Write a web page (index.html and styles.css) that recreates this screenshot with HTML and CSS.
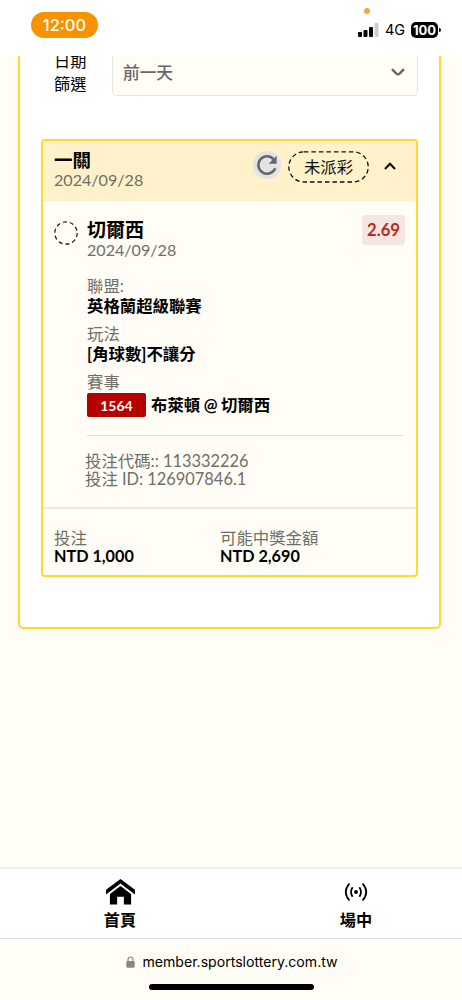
FILE: index.html
```
<!DOCTYPE html>
<html lang="zh-Hant">
<head>
    <meta charset="UTF-8">
    <meta name="viewport" content="width=device-width, initial-scale=1.0">
    <title>投注紀錄</title>
    <link rel="stylesheet" href="styles.css">
</head>
<body>

    <header class="status-bar">
        <span class="clock">12:00</span>
        <div class="status-right">
            <span class="mic-dot"></span>
            <svg class="signal" width="21" height="14" viewBox="0 0 21 14">
                <rect x="0" y="9" width="4" height="5" rx="1"/>
                <rect x="5.5" y="7" width="4" height="7" rx="1"/>
                <rect x="11" y="4" width="4" height="10" rx="1"/>
                <rect x="16.5" y="0" width="4" height="14" rx="1" fill="#ccc"/>
            </svg>
            <span class="network">4G</span>
            <span class="battery">100</span>
            <span class="battery-tip"></span>
        </div>
    </header>

    <main class="content">
        <section class="panel">
            <div class="filter">
                <div class="filter-label"><div>日期<br>篩選</div></div>
                <div class="select">
                    <span>前一天</span>
                    <svg width="14" height="9" viewBox="0 0 14 9" fill="none" stroke="#666" stroke-width="2.4">
                        <path d="M1 1.2l4.4 4.5q1.6 1.4 3.2 0L13 1.2"/>
                    </svg>
                </div>
            </div>

            <article class="ticket">
                <div class="ticket-head">
                    <div class="ticket-title">
                        <h2>一關</h2>
                        <p class="date">2024/09/28</p>
                    </div>
                    <button class="refresh">
                        <svg width="28" height="28" viewBox="0 0 28 28">
                            <path d="M22.2 17.2A8.7 8.7 0 1 1 20.6 8.3" fill="none" stroke="#666" stroke-width="2.5"/>
                            <path d="M23.6 4.8v8h-8z" fill="#666"/>
                        </svg>
                    </button>
                    <span class="state">
                        <svg class="state-outline" width="81" height="32" viewBox="0 0 81 32">
                            <rect x=".8" y=".8" width="79.4" height="30.2" rx="15.1" fill="none" stroke="#111" stroke-width="1.3" stroke-dasharray="4.5 3"/>
                        </svg>
                        未派彩
                    </span>
                    <svg class="toggle" width="12" height="8" viewBox="0 0 12 8" fill="none" stroke="#000" stroke-width="2">
                        <path d="M1 7l5-5.2L11 7"/>
                    </svg>
                </div>

                <div class="bet">
                    <svg class="pending" width="24" height="24" viewBox="0 0 24 24">
                        <circle cx="12" cy="12" r="11.2" fill="none" stroke="#111" stroke-width="1.2" stroke-dasharray="4 3.04"/>
                    </svg>
                    <div class="bet-body">
                        <div class="bet-top">
                            <div>
                                <h3>切爾西</h3>
                                <p class="date">2024/09/28</p>
                            </div>
                            <span class="odds">2.69</span>
                        </div>
                        <dl class="details">
                            <dt>聯盟:</dt>
                            <dd>英格蘭超級聯賽</dd>
                            <dt>玩法</dt>
                            <dd>[角球數]不讓分</dd>
                            <dt>賽事</dt>
                            <dd class="match"><span class="match-code">1564</span><span class="teams">布萊頓 @ 切爾西</span></dd>
                        </dl>
                        <div class="ids">
                            <p>投注代碼:: 113332226</p>
                            <p>投注 ID: 126907846.1</p>
                        </div>
                    </div>
                </div>

                <div class="totals">
                    <div class="total">
                        <p>投注</p>
                        <strong>NTD 1,000</strong>
                    </div>
                    <div class="total">
                        <p>可能中獎金額</p>
                        <strong>NTD 2,690</strong>
                    </div>
                </div>
            </article>
        </section>
    </main>

    <nav class="tabs">
        <a class="tab">
            <svg width="29" height="26" viewBox="0 0 30 27">
                <path d="M15 0L30 11.2V16L15 4.8 0 16V11.2z"/>
                <path d="M15 7.3L26 15.5V26.5H18.5V18.5H11.5V26.5H4V15.5z"/>
            </svg>
            <span>首頁</span>
        </a>
        <a class="tab">
            <svg width="24" height="20" viewBox="0 0 24 20" fill="none" stroke="#000" stroke-width="1.8">
                <circle cx="12" cy="10" r="1.9" fill="#000" stroke="none"/>
                <path d="M8.6 5.2q-3.2 4.800 0 9.6M15.4 5.2q3.2 4.800 0 9.6M5.4 1.5q-7.2 8.5 0 17M18.6 1.5q7.2 8.5 0 17"/>
            </svg>
            <span>場中</span>
        </a>
    </nav>

    <footer class="address">
        <div class="url">
            <svg width="9" height="12" viewBox="0 0 9 12">
                <path d="M2 6V3.5a2.5 2.5 0 0 1 5 0V6" fill="none" stroke="#888" stroke-width="1.2"/>
                <rect x=".3" y="5" width="8.4" height="6.7" rx="1.2" fill="#888"/>
            </svg>
            <span>member.sportslottery.com.tw</span>
        </div>
        <div class="home-bar"></div>
    </footer>

</body>
</html>
```
FILE: styles.css
```
* {
    box-sizing: border-box;
}
body {
    margin: 0;
    height: 1000px;
    display: flex;
    flex-direction: column;
    overflow: hidden;
    background: #fffdf5;
    color: #000;
    font-family: Lato, "Noto Sans CJK TC", sans-serif;
    font-size: 16.4px;
}
h2, h3, p, dl, dd {
    margin: 0;
}

/* status bar */
.status-bar {
    height: 56px;
    flex: none;
    display: flex;
    justify-content: space-between;
    align-items: flex-start;
    padding: 12px 21px 0 31px;
    background: #fff;
    font-family: Inter, "Liberation Sans", sans-serif;
}
.clock {
    width: 67px;
    height: 26px;
    border-radius: 13px;
    background: #fa9200;
    color: #fff;
    font-size: 16.5px;
    font-weight: 500;
    line-height: 26px;
    text-align: center;
}
.status-right {
    position: relative;
    display: flex;
    align-items: center;
    height: 35px;
}
.mic-dot {
    position: absolute;
    left: 6px;
    top: -4px;
    width: 6px;
    height: 6px;
    border-radius: 50%;
    background: #ffa530;
}
.network {
    width: 20px;
    margin: 0 6px;
    font-size: 14.5px;
    line-height: 18px;
}
.battery {
    width: 27px;
    height: 16px;
    border-radius: 5px;
    background: #000;
    color: #fff;
    font-size: 13px;
    font-weight: 700;
    line-height: 16px;
    text-align: center;
}
.battery-tip {
    width: 2px;
    height: 4px;
    margin-left: 1px;
    border-radius: 0 2px 2px 0;
    background: #000;
}

/* betting panel */
.content {
    flex: 1;
    min-height: 0;
    padding: 0 21px 0 18px;
}
.panel {
    height: 573px;
    padding: 0 21px;
    border: 2px solid #ffd92e;
    border-top: 0;
    border-radius: 0 0 5px 5px;
    background: #fff;
}
.filter {
    display: flex;
    justify-content: space-between;
    height: 40px;
}
.filter-label {
    height: 40px;
    margin-left: 13px;
    overflow: hidden;
    font-size: 16.2px;
    line-height: 23px;
}
.filter-label div {
    margin-top: -7px;
}
.select {
    display: flex;
    justify-content: space-between;
    align-items: center;
    width: 306px;
    height: 40px;
    padding: 0 12px 7px 10px;
    border: 1px solid #e6e2dc;
    border-top: 0;
    border-radius: 0 0 5px 5px;
    background: #fffdf5;
    color: #666;
    font-size: 16.7px;
    font-weight: 500;
}
.ticket {
    height: 438px;
    margin-top: 43px;
    border: 2px solid #ffd92e;
    border-radius: 4px;
    background: #fffdf5;
}
.ticket-head {
    display: flex;
    align-items: flex-start;
    height: 60px;
    padding: 8px 20px 0 11px;
    background: #fff1ca;
}
.ticket-title {
    width: 199px;
}
h2 {
    font-size: 18.5px;
    line-height: 22px;
}
.date {
    color: #706e68;
    font-size: 16.1px;
    line-height: 18px;
}
.refresh {
    width: 28px;
    height: 28px;
    margin: 2px 7px 0 0;
    padding: 0;
    border: 0;
    border-radius: 50%;
    background: #e3e3e5;
}
.state {
    position: relative;
    width: 81px;
    height: 32px;
    margin-top: 2px;
    color: #111;
    line-height: 31px;
    text-align: center;
}
.state-outline {
    position: absolute;
    left: 0;
    top: 0;
}
.toggle {
    margin: 13px 0 0 15px;
}

.bet {
    display: flex;
    height: 306px;
    padding: 18px 13px 0 11px;
}
.pending {
    flex: none;
    margin: 2px 9px 0 0;
}
.bet-body {
    flex: 1;
}
.bet-top {
    display: flex;
    justify-content: space-between;
    height: 58px;
}
h3 {
    font-size: 19px;
    line-height: 22px;
}
.odds {
    width: 43px;
    height: 30px;
    margin-top: -4px;
    margin-right: -2px;
    border-radius: 4px;
    background: #f7e6df;
    color: #ba2823;
    font-size: 16.7px;
    font-weight: 700;
    line-height: 31px;
    text-align: center;
}
.details {
    height: 159px;
    border-bottom: 1px solid #e4e0da;
}
dt {
    color: #706e68;
    line-height: 18px;
}
dd {
    margin-bottom: 8px;
    font-weight: 700;
    line-height: 22px;
}
.match {
    display: flex;
    align-items: center;
    gap: 5px;
    height: 24px;
    margin-top: 2px;
}
.match-code {
    width: 59px;
    height: 24px;
    border-radius: 2px;
    background: #b60000;
    color: #fff;
    font-size: 14px;
    line-height: 25px;
    text-align: center;
}
.teams {
    word-spacing: -0.5px;
}
.ids {
    margin: 16px 0 0 -2px;
    color: #706e68;
    line-height: 18px;
}
.totals {
    display: flex;
    height: 68px;
    padding: 20px 11px 0;
    border-top: 2px solid #ece8e2;
    line-height: 18px;
}
.total {
    width: 166px;
}
.total p {
    color: #706e68;
}
.total strong {
    display: block;
    font-size: 16.2px;
}

/* bottom navigation */
.tabs {
    display: flex;
    flex: none;
    height: 72px;
    border-top: 2px solid #ececec;
    border-bottom: 1px solid #dedede;
    background: #fff;
}
.tab {
    width: 236px;
    flex: none;
    padding: 10px 0 0 4px;
    display: flex;
    flex-direction: column;
    align-items: center;
    font-size: 16.2px;
    font-weight: 700;
    line-height: 22px;
}
.tab svg {
    height: 26px;
}
.tab span {
    margin-top: 4px;
}

/* browser address */
.address {
    flex: none;
    height: 61px;
}
.url {
    display: flex;
    justify-content: center;
    align-items: center;
    gap: 7px;
    height: 45px;
    padding-left: 2px;
    font-family: Inter, "Liberation Sans", sans-serif;
    font-size: 14.1px;
}
.home-bar {
    width: 165px;
    height: 6px;
    margin: 0 auto;
    border-radius: 3px;
    background: #000;
}
```
